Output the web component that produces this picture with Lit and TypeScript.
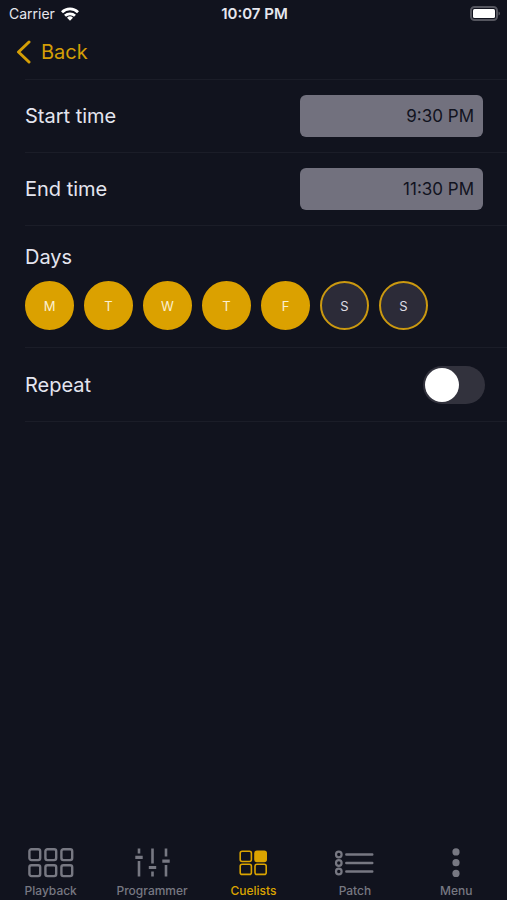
import { LitElement, html, css, svg } from "lit";
import { customElement, property, state } from "lit/decorators.js";
import { classMap } from "lit/directives/class-map.js";

const sq = (x: number, y: number, w: number, h: number, filled = false) =>
  svg`<rect x=${x} y=${y} width=${w} height=${h} rx="2" fill=${filled ? "currentColor" : "none"} />`;

const ICONS: Record<string, unknown> = {
  playback: html`<svg width="48" height="32" viewBox="0 0 48 32" fill="none" stroke="currentColor" stroke-width="2.4" aria-hidden="true">
    ${[2.4, 18.4, 34.4].map((x) => [2.3, 18.3].map((y) => sq(x, y, 10.8, 10.8)))}
  </svg>`,
  programmer: html`<svg width="48" height="32" viewBox="0 0 48 32" fill="none" stroke="currentColor" stroke-width="2.6" aria-hidden="true">
    <path d="M11 1.5v5M11 14v15.5M24.5 1.5v15M24.5 24.5v5M38 1.5v8M38 18v11.5" />
    <path stroke-width="3.2" d="M7.3 10.3h7.4M20.8 20.5h7.4M34.3 14.2h7.4" />
  </svg>`,
  cuelists: html`<svg width="48" height="32" viewBox="0 0 48 32" fill="none" stroke="currentColor" stroke-width="1.6" aria-hidden="true">
    ${sq(10.2, 4.3, 11.2, 10.2)}${sq(25, 4.3, 11.2, 10.2, true)}${sq(10.2, 17.2, 11.2, 10.2)}${sq(25, 17.2, 11.2, 10.2)}
  </svg>`,
  patch: html`<svg width="48" height="32" viewBox="0 0 48 32" fill="none" stroke="currentColor" stroke-width="2.2" aria-hidden="true">
    <circle cx="7.8" cy="7.5" r="2.8" /><circle cx="7.8" cy="16" r="2.8" /><circle cx="7.8" cy="24.5" r="2.8" />
    <path stroke-linecap="round" stroke-width="2.4" d="M15.3 7.5h26M15.3 16h26M15.3 24.5h26" />
  </svg>`,
  menu: html`<svg width="48" height="32" viewBox="0 0 48 32" fill="currentColor" aria-hidden="true">
    <circle cx="24" cy="4.9" r="3.6" /><circle cx="24" cy="15.7" r="3.6" /><circle cx="24" cy="26.4" r="3.6" />
  </svg>`,
};

@customElement("status-bar")
class StatusBar extends LitElement {
  static styles = css`
    :host {
      display: grid;
      grid-template-columns: 1fr auto 1fr;
      align-items: center;
      height: 27px;
      padding: 0 7px 0 9px;
      color: #e6e7ee;
      font-size: 14px;
    }
    .carrier { display: flex; align-items: center; gap: 6px; }
    .clock { font-size: 15px; font-weight: 600; }
    .battery { justify-self: end; }
  `;
  render() {
    return html`
      <span class="carrier">Carrier
        <svg width="18" height="14" viewBox="0 0 18 14" fill="none" stroke="#fff" stroke-width="2.8" role="img" aria-label="Wi-Fi">
          <path d="M1 5.2a11.5 11.5 0 0 1 16 0" />
          <path d="M4 8.8a7.2 7.2 0 0 1 10 0" />
          <path d="M9 13.8l-3-3a4.3 4.3 0 0 1 6 0z" fill="#fff" stroke="none" />
        </svg>
      </span>
      <time class="clock">10:07 PM</time>
      <svg class="battery" width="30" height="15" viewBox="0 0 30 15" role="img" aria-label="Battery full">
        <rect x="1" y="1" width="26" height="13" rx="3.5" fill="none" stroke="#55565f" stroke-width="2" />
        <rect x="3" y="3" width="22" height="9" rx="1.5" fill="#fff" />
        <path d="M28.500 5.500q1.500 .7 1.500 2t-1.500 2z" fill="#55565f" />
      </svg>
    `;
  }
}

@customElement("tab-bar")
class TabBar extends LitElement {
  @property() current = "cuelists";
  static styles = css`
    :host { display: block; }
    .tabs { display: flex; height: 53px; }
    .tab {
      flex: 1;
      display: flex;
      flex-direction: column;
      align-items: center;
      color: #777882;
      font-size: 12px;
      font-weight: 500;
      line-height: 16px;
      gap: 4px;
      text-decoration: none;
    }
    .active { color: #dba400; }
    svg { display: block; }
  `;
  render() {
    return html`<nav class="tabs" aria-label="Sections">
      ${["Playback", "Programmer", "Cuelists", "Patch", "Menu"].map((name) => {
        const id = name.toLowerCase();
        return html`<a href="#${id}" class=${classMap({ tab: true, active: id === this.current })}>${ICONS[id]}<span>${name}</span></a>`;
      })}
    </nav>`;
  }
}

@customElement("app-root")
class AppRoot extends LitElement {
  @state() private days = [true, true, true, true, true, false, false];

  static styles = css`
    :host {
      display: flex;
      flex-direction: column;
      min-height: 100vh;
      box-sizing: border-box;
      background: #11131e;
      color: #e4e5ef;
      font-family: Inter, "Liberation Sans", sans-serif;
      font-size: 20px;
    }
    button, input { font-family: inherit; margin: 0; }
    .back {
      display: flex;
      align-items: center;
      align-self: flex-start;
      gap: 10px;
      height: 50px;
      margin-bottom: 2px;
      padding: 0 16px;
      border: 0;
      background: none;
      color: #d49e06;
      font-size: 20px;
    }
    .form { flex: 1; padding-left: 25px; }
    .row {
      display: flex;
      align-items: center;
      justify-content: space-between;
      height: 72px;
      padding-right: 24px;
      border-top: 1px solid #1b1d28;
    }
    .time {
      box-sizing: border-box;
      width: 40%;
      height: 42px;
      padding: 0 9px;
      border: 0;
      border-radius: 6px;
      background: #72717e;
      color: #11131e;
      font-size: 17px;
      text-align: right;
    }
    .week {
      padding: 19px 24px 17px 0;
      border-top: 1px solid #1b1d28;
    }
    .title { line-height: 24px; }
    .days { display: flex; gap: 10px; padding-top: 12px; }
    .day {
      width: 49px;
      height: 49px;
      padding: 0;
      border: 2px solid #cb9910;
      border-radius: 50%;
      background: #2c2b38;
      color: #dddde4;
      font-size: 13px;
    }
    .on { background: #dba100; border-color: #dba100; color: #fbf0d0; }
    .repeat { height: 73px; padding-right: 22px; border-bottom: 1px solid #1b1d28; }
    .switch {
      appearance: none;
      display: flex;
      align-items: center;
      box-sizing: border-box;
      width: 62px;
      height: 38px;
      padding: 2px;
      border-radius: 19px;
      background: #32323d;
    }
    .switch::before {
      content: "";
      width: 34px;
      height: 34px;
      border-radius: 50%;
      background: #fff;
    }
    .switch:checked { justify-content: flex-end; background: #dba100; }
  `;

  private toggle(i: number) {
    this.days = this.days.map((d, n) => (n === i ? !d : d));
  }

  render() {
    return html`
      <status-bar></status-bar>
      <button class="back">
        <svg width="15" height="24" viewBox="0 0 15 24" fill="none" stroke="currentColor" stroke-width="3" stroke-linecap="round" stroke-linejoin="round" aria-hidden="true"><path d="M13 2L2.5 12L13 22" /></svg>
        Back
      </button>
      <main class="form">
        <div class="row">
          <label for="start">Start time</label>
          <input class="time" id="start" type="text" value="9:30 PM" />
        </div>
        <div class="row">
          <label for="end">End time</label>
          <input class="time" id="end" type="text" value="11:30 PM" />
        </div>
        <div class="week" role="group" aria-labelledby="days">
          <div class="title" id="days">Days</div>
          <div class="days">
            ${["M", "T", "W", "T", "F", "S", "S"].map(
              (d, i) => html`<button
                class=${classMap({ day: true, on: this.days[i] })}
                aria-pressed=${this.days[i] ? "true" : "false"}
                @click=${() => this.toggle(i)}
              >${d}</button>`
            )}
          </div>
        </div>
        <div class="row repeat">
          <label for="repeat">Repeat</label>
          <input class="switch" id="repeat" type="checkbox" role="switch" />
        </div>
      </main>
      <tab-bar current="cuelists"></tab-bar>
    `;
  }
}
